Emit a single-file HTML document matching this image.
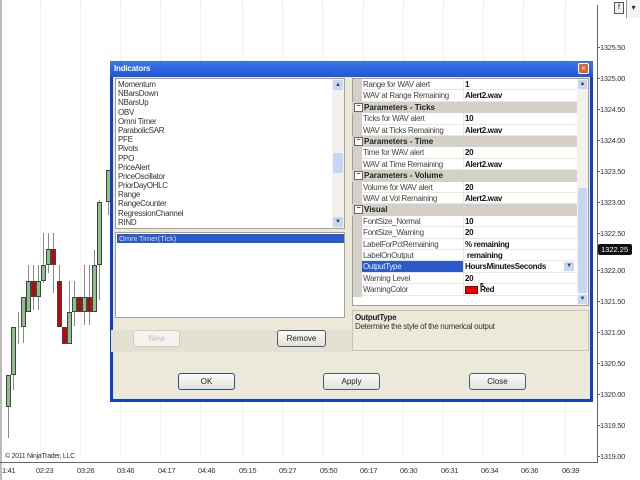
<!DOCTYPE html>
<html><head><meta charset="utf-8"><style>
*{margin:0;padding:0;box-sizing:border-box}
body{width:640px;height:480px;position:relative;overflow:hidden;background:#fff;font-family:"Liberation Sans",sans-serif;font-size:8px;color:#222}
.a{position:absolute}
.grid{position:absolute;top:0;height:458px;width:0;border-left:1px dotted #e6e6e6}
.pl{position:absolute;left:600px;font-size:7.5px;color:#333;letter-spacing:-0.3px}
.pl:before{content:"";position:absolute;left:-3px;top:4px;width:3px;border-top:1px solid #666}
.tl{position:absolute;top:466px;font-size:7.5px;color:#333;letter-spacing:-0.3px}
.wk{position:absolute;width:1px;background:#888}
.bd{position:absolute;width:5px;border:1px solid #444}
.g{background:#8fbf8a}.r{background:#c00}
.li{height:9.2px;line-height:9.2px;padding-left:2px;font-size:8px;letter-spacing:-0.3px;color:#333}
.btn{position:absolute;height:17px;background:linear-gradient(#fbfbf8,#e3e2da);border:1px solid #4a5a6a;border-radius:3px;text-align:center;line-height:15px;font-size:8px;color:#222}
.pr{position:absolute;left:362px;width:215px;height:11.4px;border-bottom:1px solid #e8e7e0;font-size:8px;line-height:11px;letter-spacing:-0.3px}
.pr .k{position:absolute;left:1px;color:#444}
.pr .v{position:absolute;left:103px;font-weight:bold;color:#111}
.pr:after{content:"";position:absolute;left:101px;top:0;height:11px;border-left:1px solid #e8e7e0}
.hd{position:absolute;left:352px;width:225px;height:11.4px;background:#d4d0c8;font-weight:bold;font-size:8px;line-height:11px;padding-left:12px;color:#222}
.hd:before{content:"−";position:absolute;left:2px;top:1px;width:7px;height:7px;border:1px solid #666;background:#fff;font-size:7px;line-height:5px;text-align:center}
</style></head><body>
<!-- chart grid -->
<div class="grid" style="left:40px"></div><div class="grid" style="left:80px"></div><div class="grid" style="left:120px"></div><div class="grid" style="left:160px"></div><div class="grid" style="left:200px"></div><div class="grid" style="left:242px"></div><div class="grid" style="left:282px"></div><div class="grid" style="left:322px"></div><div class="grid" style="left:363px"></div><div class="grid" style="left:403px"></div><div class="grid" style="left:443px"></div><div class="grid" style="left:483px"></div><div class="grid" style="left:523px"></div><div class="grid" style="left:565px"></div>
<div class="a" style="left:0;top:0;width:2px;height:480px;background:#bbb"></div>
<div class="a" style="left:597px;top:5px;width:1px;height:458px;background:#666"></div>
<div class="a" style="left:0;top:462px;width:598px;height:1px;background:#666"></div>
<div class="a" style="left:614px;top:2px;width:10px;height:12px;border:1px solid #555;background:#eee;font-size:7px;text-align:center;line-height:10px">f</div>
<div class="a" style="left:626px;top:0;width:14px;height:18px;background:#f4f4f4;border-left:1px solid #999;font-size:8px;text-align:center;line-height:16px">▾</div>
<div class="pl" style="top:43px">1325.50</div><div class="pl" style="top:74px">1325.00</div><div class="pl" style="top:105px">1324.50</div><div class="pl" style="top:136px">1324.00</div><div class="pl" style="top:167px">1323.50</div><div class="pl" style="top:198px">1323.00</div><div class="pl" style="top:229px">1322.50</div><div class="pl" style="top:266px">1322.00</div><div class="pl" style="top:297px">1321.50</div><div class="pl" style="top:328px">1321.00</div><div class="pl" style="top:359px">1320.50</div><div class="pl" style="top:390px">1320.00</div><div class="pl" style="top:421px">1319.50</div><div class="pl" style="top:452px">1319.00</div>
<div class="a" style="left:598px;top:244px;width:34px;height:11px;background:#111;color:#fff;font-size:7.5px;line-height:11px;padding-left:3px;border-radius:2px">1322.25</div>
<div class="a" style="left:5px;top:453px;font-size:7px;color:#333;letter-spacing:-0.3px">© 2011 NinjaTrader, LLC</div>
<div class="tl" style="left:2px">1:41</div><div class="tl" style="left:36px">02:23</div><div class="tl" style="left:77px">03:26</div><div class="tl" style="left:117px">03:46</div><div class="tl" style="left:158px">04:17</div><div class="tl" style="left:198px">04:46</div><div class="tl" style="left:239px">05:15</div><div class="tl" style="left:279px">05:27</div><div class="tl" style="left:320px">05:50</div><div class="tl" style="left:360px">06:17</div><div class="tl" style="left:400px">06:30</div><div class="tl" style="left:441px">06:31</div><div class="tl" style="left:481px">06:34</div><div class="tl" style="left:521px">06:36</div><div class="tl" style="left:562px">06:39</div>
<!-- candles -->
<div class="wk" style="left:8px;top:375px;height:63px"></div><div class="bd g" style="left:6px;top:375px;height:32px"></div>
<div class="wk" style="left:13px;top:327px;height:63px"></div><div class="bd g" style="left:11px;top:327px;height:48px"></div>
<div class="wk" style="left:18px;top:312px;height:32px"></div>
<div class="wk" style="left:23px;top:297px;height:46px"></div><div class="bd g" style="left:21px;top:297px;height:30px"></div>
<div class="wk" style="left:28px;top:265px;height:45px"></div><div class="bd g" style="left:26px;top:281px;height:31px"></div>
<div class="wk" style="left:33px;top:265px;height:45px"></div><div class="bd r" style="left:31px;top:281px;height:16px"></div>
<div class="wk" style="left:38px;top:265px;height:45px"></div><div class="bd g" style="left:36px;top:281px;height:16px"></div>
<div class="wk" style="left:43px;top:233px;height:50px"></div><div class="bd g" style="left:41px;top:265px;height:16px"></div>
<div class="wk" style="left:48px;top:233px;height:40px"></div><div class="bd g" style="left:46px;top:249px;height:16px"></div>
<div class="wk" style="left:53px;top:233px;height:60px"></div><div class="bd r" style="left:51px;top:249px;height:16px"></div>
<div class="wk" style="left:59px;top:265px;height:46px"></div><div class="bd r" style="left:57px;top:281px;height:46px"></div>
<div class="wk" style="left:64px;top:327px;height:17px"></div><div class="bd r" style="left:62px;top:327px;height:17px"></div>
<div class="wk" style="left:69px;top:281px;height:63px"></div><div class="bd g" style="left:67px;top:312px;height:32px"></div>
<div class="wk" style="left:74px;top:281px;height:45px"></div><div class="bd g" style="left:72px;top:297px;height:15px"></div>
<div class="bd r" style="left:77px;top:297px;height:15px"></div>
<div class="wk" style="left:84px;top:265px;height:60px"></div><div class="bd g" style="left:82px;top:297px;height:15px"></div>
<div class="wk" style="left:89px;top:265px;height:60px"></div><div class="bd r" style="left:87px;top:297px;height:15px"></div>
<div class="wk" style="left:94px;top:250px;height:60px"></div><div class="bd g" style="left:92px;top:265px;height:47px"></div>
<div class="wk" style="left:99px;top:200px;height:100px"></div><div class="bd g" style="left:97px;top:202px;height:63px"></div>
<div class="wk" style="left:108px;top:170px;height:45px"></div><div class="bd g" style="left:106px;top:170px;height:32px"></div>
<!-- dialog -->
<div class="a" style="left:110px;top:61px;width:483px;height:341px;background:#ece9d8;border:3px solid #1040d0;border-top:none"></div>
<div class="a" style="left:110px;top:61px;width:483px;height:16px;background:linear-gradient(#3a78e8,#1f56d8);color:#fff;font-weight:bold;font-size:8px;line-height:16px;padding-left:4px;letter-spacing:-0.2px">Indicators</div>
<div class="a" style="left:578px;top:63px;width:11px;height:11px;background:#e0603a;border:1px solid #fff;border-radius:2px;color:#fff;font-size:8px;line-height:9px;text-align:center">×</div>
<div class="a" style="left:111px;top:330px;width:241px;height:22px;background:#e4e1d3"></div>
<!-- list 1 -->
<div class="a" style="left:115px;top:78px;width:230px;height:151px;background:#fff;border:1px solid #a0a0a0;padding-top:1px">
<div class="li">Momentum</div><div class="li">NBarsDown</div><div class="li">NBarsUp</div><div class="li">OBV</div><div class="li">Omni Timer</div><div class="li">ParabolicSAR</div><div class="li">PFE</div><div class="li">Pivots</div><div class="li">PPO</div><div class="li">PriceAlert</div><div class="li">PriceOscillator</div><div class="li">PriorDayOHLC</div><div class="li">Range</div><div class="li">RangeCounter</div><div class="li">RegressionChannel</div><div class="li">RIND</div>
<div class="a" style="right:0;top:0;width:12px;height:149px;background:#f2f1ec"></div>
<div class="a" style="right:1px;top:1px;width:10px;height:10px;background:#c8d6f6;font-size:6px;text-align:center;line-height:10px;color:#345">▲</div>
<div class="a" style="right:1px;top:74px;width:10px;height:20px;background:#c8d6f6;border-radius:2px"></div>
<div class="a" style="right:1px;bottom:1px;width:10px;height:10px;background:#c8d6f6;font-size:6px;text-align:center;line-height:10px;color:#345">▼</div>
</div>
<!-- list 2 -->
<div class="a" style="left:115px;top:232px;width:230px;height:86px;background:#fff;border:1px solid #a0a0a0">
<div class="a" style="left:1px;top:1px;width:227px;height:9px;background:#2a5bc8;color:#dde;font-size:7.5px;line-height:9px;padding-left:2px">Omni Timer(Tick)</div></div>
<div class="btn" style="left:133px;top:330px;width:47px;color:#bbb;border-color:#ccc;background:#f4f3ee">New</div>
<div class="btn" style="left:277px;top:330px;width:49px">Remove</div>
<!-- property grid -->
<div class="a" style="left:352px;top:78px;width:237px;height:228px;background:#fff;border:1px solid #a0a0a0"></div>
<div class="a" style="left:353px;top:79px;width:9px;height:218px;background:#d4d0c8"></div>
<div class="a" style="left:577px;top:79px;width:11px;height:226px;background:#f2f1ec"></div>
<div class="a" style="left:578px;top:80px;width:9px;height:9px;background:#c8d6f6;font-size:6px;text-align:center;line-height:9px;color:#345">▲</div>
<div class="a" style="left:578px;top:188px;width:9px;height:105px;background:#c8d6f6;border-radius:2px"></div>
<div class="a" style="left:578px;top:295px;width:9px;height:9px;background:#c8d6f6;font-size:6px;text-align:center;line-height:9px;color:#345">▼</div>
<div class="pr" style="top:79px"><span class="k">Range for WAV alert</span><span class="v">1</span></div>
<div class="pr" style="top:90.4px"><span class="k">WAV at Range Remaining</span><span class="v">Alert2.wav</span></div>
<div class="hd" style="top:101.8px">Parameters - Ticks</div>
<div class="pr" style="top:113.2px"><span class="k">Ticks for WAV alert</span><span class="v">10</span></div>
<div class="pr" style="top:124.6px"><span class="k">WAV at Ticks Remaining</span><span class="v">Alert2.wav</span></div>
<div class="hd" style="top:136px">Parameters - Time</div>
<div class="pr" style="top:147.4px"><span class="k">Time for WAV alert</span><span class="v">20</span></div>
<div class="pr" style="top:158.8px"><span class="k">WAV at Time Remaining</span><span class="v">Alert2.wav</span></div>
<div class="hd" style="top:170.2px">Parameters - Volume</div>
<div class="pr" style="top:181.6px"><span class="k">Volume for WAV alert</span><span class="v">20</span></div>
<div class="pr" style="top:193px"><span class="k">WAV at Vol Remaining</span><span class="v">Alert2.wav</span></div>
<div class="hd" style="top:204.4px">Visual</div>
<div class="pr" style="top:215.8px"><span class="k">FontSize_Normal</span><span class="v">10</span></div>
<div class="pr" style="top:227.2px"><span class="k">FontSize_Warning</span><span class="v">20</span></div>
<div class="pr" style="top:238.6px"><span class="k">LabelForPctRemaining</span><span class="v">% remaining</span></div>
<div class="pr" style="top:250px"><span class="k">LabelOnOutput</span><span class="v">&nbsp;remaining</span></div>
<div class="pr" style="top:261.4px"><span class="k" style="left:0;width:101px;height:11px;background:#2a5bc8;color:#e8eeff;padding-left:1px">OutputType</span><span class="v">HoursMinutesSeconds</span><span class="a" style="left:202px;top:1px;width:10px;height:9px;background:#c8d6f6;font-size:6px;text-align:center;line-height:9px;color:#345">▼</span></div>
<div class="pr" style="top:272.8px"><span class="k">Warning Level</span><span class="v">20</span></div>
<div class="pr" style="top:284.2px"><span class="k">WarningColor</span><span class="a" style="left:103px;top:2px;width:13px;height:8px;background:#e00;border:1px solid #800"></span><span class="v" style="left:118px">Red</span></div>
<div class="a" style="left:479px;top:281px;font-size:10px;color:#000">↖</div>
<!-- description -->
<div class="a" style="left:352px;top:310px;width:237px;height:41px;border:1px solid #c8c5b8;padding:2px">
<div style="font-weight:bold;font-size:8px;letter-spacing:-0.3px">OutputType</div>
<div style="font-size:8px;letter-spacing:-0.3px;color:#333">Determine the style of the numerical output</div></div>
<div class="btn" style="left:178px;top:373px;width:57px;border-color:#2a4a9a">OK</div>
<div class="btn" style="left:323px;top:373px;width:57px">Apply</div>
<div class="btn" style="left:469px;top:373px;width:57px">Close</div>
</body></html>
